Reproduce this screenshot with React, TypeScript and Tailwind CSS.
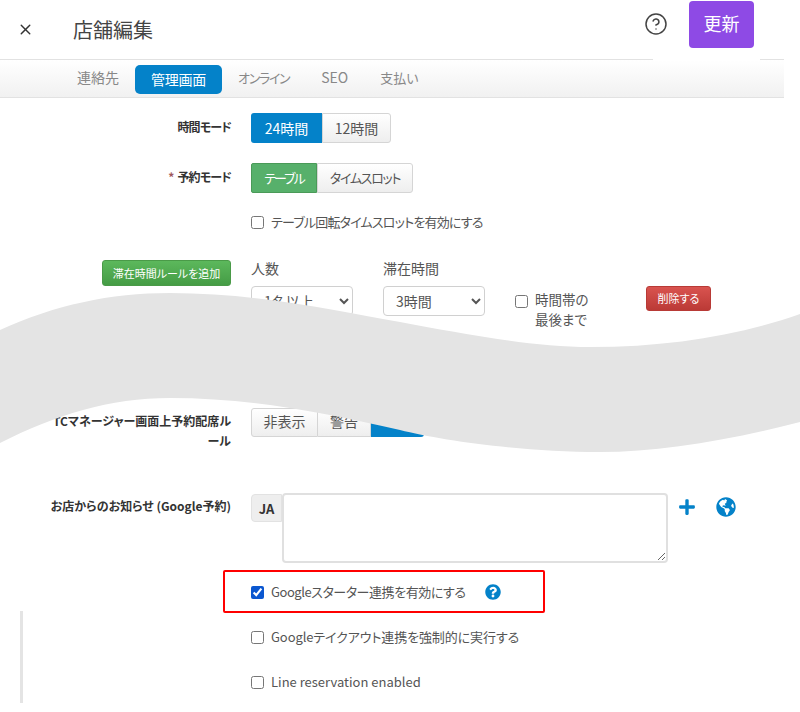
import { CircleHelp, X } from "lucide-react";
import { FaGlobeAmericas, FaPlus, FaQuestionCircle } from "react-icons/fa";

const tabs = [
  { name: "連絡先", cls: "" },
  { name: "オンライン", cls: "text-[13px] tracking-[-1.3px]" },
  { name: "SEO", cls: "" },
  { name: "支払い", cls: "text-[13px]" },
];

function Label({ children, className = "" }: { children: React.ReactNode; className?: string }) {
  return <div className={`w-[231px] shrink-0 text-right text-[12px] font-bold leading-5 text-[#333] ${className}`}>{children}</div>;
}

function Check({ label, checked = false, className = "" }: { label: string; checked?: boolean; className?: string }) {
  return (
    <label className={`flex items-center gap-[7px] text-[13px] leading-5 text-[#555] ${className}`}>
      <input type="checkbox" defaultChecked={checked} className="m-0 h-[13px] w-[13px] accent-[#0b57d0]" />
      {label}
    </label>
  );
}

export default function App() {
  return (
    <div className="relative h-[712px] w-[800px] overflow-hidden bg-white font-['Noto_Sans_CJK_JP','Noto_Sans',sans-serif] [font-feature-settings:'palt']">
      {/* header */}
      <div className="flex h-[59px] items-center">
        <X size={17} strokeWidth={2} className="ml-[17px] text-[#333]" />
        <h1 className="ml-[39px] text-[20px] font-normal text-[#444]">店舗編集</h1>
        <CircleHelp size={24} strokeWidth={1.5} className="ml-auto mb-[11px] text-[#444]" />
        <button className="ml-[21px] mr-[46px] mb-[11px] h-[47px] w-[65px] rounded-[4px] bg-[#8e4ae5] pb-[2px] text-[18px] text-white">更新</button>
      </div>

      {/* tabs */}
      <div className="flex h-[39px] w-[784px] items-center border-y border-[#e2e2e2] bg-gradient-to-b from-white to-[#f1f1f1] pl-[61px] text-[14px] text-[#888]">
        <div className="mt-[-2px] px-4">{tabs[0].name}</div>
        <div className="mt-[1px] flex h-[29px] items-center rounded-[5px] bg-[#0482c9] px-4 tracking-[-0.25px] text-white">管理画面</div>
        {tabs.slice(1).map((t) => (
          <div key={t.name} className={`mt-[-2px] px-4 ${t.cls}`}>{t.name}</div>
        ))}
      </div>
      <div className="absolute left-[653px] top-[58px] h-[3px] w-[107px] bg-white" />

      {/* form */}
      <div className="flex items-start gap-5 pt-[15px]">
        <Label className="mt-[4px] tracking-[-0.8px]">時間モード</Label>
        <div className="flex h-[30px] text-[14px]">
          <div className="flex w-[71px] items-center justify-center rounded-l-[3px] bg-[#0482c9] text-white">24時間</div>
          <div className="flex w-[69px] items-center justify-center rounded-r-[3px] border border-[#d5d5d5] bg-gradient-to-b from-white to-[#eeeeee] text-[#555]">12時間</div>
        </div>
      </div>

      <div className="flex items-start gap-5 pt-5">
        <Label className="mt-[4px] tracking-[-0.8px]"><span className="mr-1 text-[#a0585c]">*</span>予約モード</Label>
        <div className="flex h-[30px] text-[13px]">
          <div className="flex w-[66px] items-center justify-center rounded-l-[2px] border border-[#4a9a58] bg-[#57b06b] tracking-[-2px] text-white">テーブル</div>
          <div className="flex w-[96px] items-center justify-center rounded-r-[3px] border border-[#d5d5d5] bg-gradient-to-b from-white to-[#eeeeee] tracking-[-1.3px] text-[#555]">タイムスロット</div>
        </div>
      </div>

      <div className="pl-[251px] pt-[19px]">
        <Check label="テーブル回転タイムスロットを有効にする" className="tracking-[-0.8px]" />
      </div>

      <div className="flex items-start gap-5 pt-[28px]">
        <div className="flex w-[231px] shrink-0 justify-end">
          <button className="h-[26px] w-[129px] rounded-[3px] border border-[#4a9a48] bg-gradient-to-b from-[#5cb85c] to-[#459c45] text-[11px] text-white">滞在時間ルールを追加</button>
        </div>
        <div className="flex items-start text-[14px] text-[#555]">
          <div className="w-[132px]">
            <div className="mt-[-2px] h-[28px] leading-5">人数</div>
            <select className="h-[30px] w-[102px] rounded-[4px] border border-[#d0d0d0] bg-white pl-2 text-[14px] text-[#555]"><option>1名以上</option></select>
          </div>
          <div className="w-[132px]">
            <div className="mt-[-2px] h-[28px] leading-5">滞在時間</div>
            <select className="h-[30px] w-[102px] rounded-[4px] border border-[#d0d0d0] bg-white pl-2 text-[14px] text-[#555]"><option>3時間</option></select>
          </div>
          <div className="mt-[26px] flex w-[131px] items-start gap-[7px]">
            <input type="checkbox" className="m-0 mt-[9px] h-[13px] w-[13px]" />
            <div className="w-[56px] text-[13.5px] leading-[20px]"><div className="mt-[3px]">時間帯の</div><div>最後まで</div></div>
          </div>
          <button className="mt-[26px] h-[25px] w-[65px] rounded-[3px] border border-[#b83a36] bg-gradient-to-b from-[#d9534f] to-[#bb3a36] text-[11px] text-white">削除する</button>
        </div>
      </div>

      <div className="flex items-start gap-5 pt-[79px]">
        <Label className="mt-[3px] whitespace-nowrap">TCマネージャー画面上予約配席ル<br />ール</Label>
        <div className="flex h-[29px] text-[14px]">
          <div className="flex w-[67px] items-center justify-center rounded-l-[3px] border border-[#d5d5d5] bg-gradient-to-b from-white to-[#eeeeee] pb-[2px] text-[#555]">非表示</div>
          <div className="flex w-[53px] items-center justify-center border-y border-r border-[#d5d5d5] bg-gradient-to-b from-white to-[#eeeeee] pb-[2px] text-[#555]">警告</div>
          <div className="w-[53px] rounded-r-[3px] bg-[#0482c9]" />
        </div>
      </div>

      <div className="flex items-start gap-5 pt-[42px]">
        <Label className="mt-[3px]">お店からのお知らせ (Google予約)</Label>
        <div className="flex items-start">
          <div className="mt-[1px] flex h-[28px] w-[31px] items-center justify-center rounded-l-[4px] border border-[#e2e2e2] bg-[#eeeeee] pt-[2px] text-[13px] font-bold text-[#333]">JA</div>
          <textarea className="block h-[70px] w-[386px] rounded-[4px] border-2 border-[#e0e0e0] bg-white" />
          <FaPlus size={18} className="ml-[10px] mt-[5px] text-[#0482c9]" />
          <FaGlobeAmericas size={20} className="ml-[20px] mt-[4px] text-[#0482c9]" />
        </div>
      </div>

      <div className="flex items-center pl-[251px] pt-[19px]">
        <Check label="Googleスターター連携を有効にする" checked className="tracking-[-0.45px]" />
        <FaQuestionCircle size={16} className="ml-[20px] text-[#0482c9]" />
      </div>
      <div className="pl-[251px] pt-[25px]"><Check label="Googleテイクアウト連携を強制的に実行する" className="tracking-[-0.1px]" /></div>
      <div className="pl-[251px] pt-[25px]"><Check label="Line reservation enabled" className="text-[13.5px]" /></div>

      {/* annotations over the page */}
      <div className="absolute left-[223px] top-[570px] h-[43px] w-[322px] rounded-[2px] border-2 border-[#ff0000]" />
      <div className="absolute left-[20px] top-[611px] h-[92px] w-[3px] bg-[#e4e4e4]" />

      {/* torn-page wave */}
      <svg className="absolute left-0 top-0" width="800" height="712" viewBox="0 0 800 712">
        <path
          fill="#e4e4e4"
          d="M0 330 C55 305 110 293 170 293 C260 293 340 312 400 322 C460 333 530 347 590 347 C670 347 740 335 800 314 L800 422 C730 440 660 452 600 452 C520 452 440 440 400 430 C320 412 250 398 170 398 C110 398 55 415 0 443 Z"
        />
      </svg>
    </div>
  );
}
